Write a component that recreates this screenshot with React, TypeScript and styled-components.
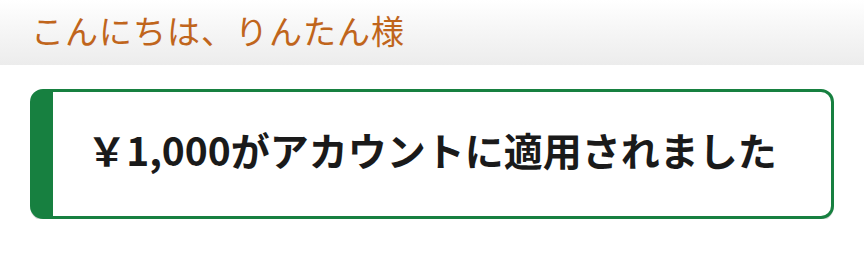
import React from 'react';
import styled, { createGlobalStyle } from 'styled-components';

const GlobalStyle = createGlobalStyle`
  html, body {
    margin: 0;
    padding: 0;
    background: #fff;
    font-family: "Noto Sans CJK JP", "Noto Sans", sans-serif;
  }
`;

const Header = styled.header`
  height: 65px;
  display: flex;
  align-items: center;
  padding-left: 31px;
  background: linear-gradient(to bottom, #ffffff 0%, #f7f7f7 40%, #ececec 100%);
`;

const Greeting = styled.h1`
  margin: 0;
  font-size: 33px;
  font-weight: 400;
  color: #c0651c;
  letter-spacing: 1px;
  line-height: 1;
  transform: translateY(-2px);
`;

const Content = styled.main`
  padding: 24px 30px 0 30px;
`;

const Notice = styled.div`
  box-sizing: border-box;
  width: 804px;
  height: 130px;
  border: 3px solid #178040;
  border-left-width: 23px;
  border-radius: 13px;
  background: #fff;
  display: flex;
  align-items: center;
  justify-content: center;
  padding-right: 20px;
  box-shadow: 0 2px 0 -0.5px #d8d8d8;
`;

const Message = styled.p`
  margin: 0;
  font-size: 39px;
  font-weight: 700;
  color: #1a1a1a;
  transform: translateY(-5px);
`;

export default function App() {
  return (
    <>
      <GlobalStyle />
      <Header>
        <Greeting>こんにちは、りんたん様</Greeting>
      </Header>
      <Content>
        <Notice>
          <Message>￥1,000がアカウントに適用されました</Message>
        </Notice>
      </Content>
    </>
  );
}
